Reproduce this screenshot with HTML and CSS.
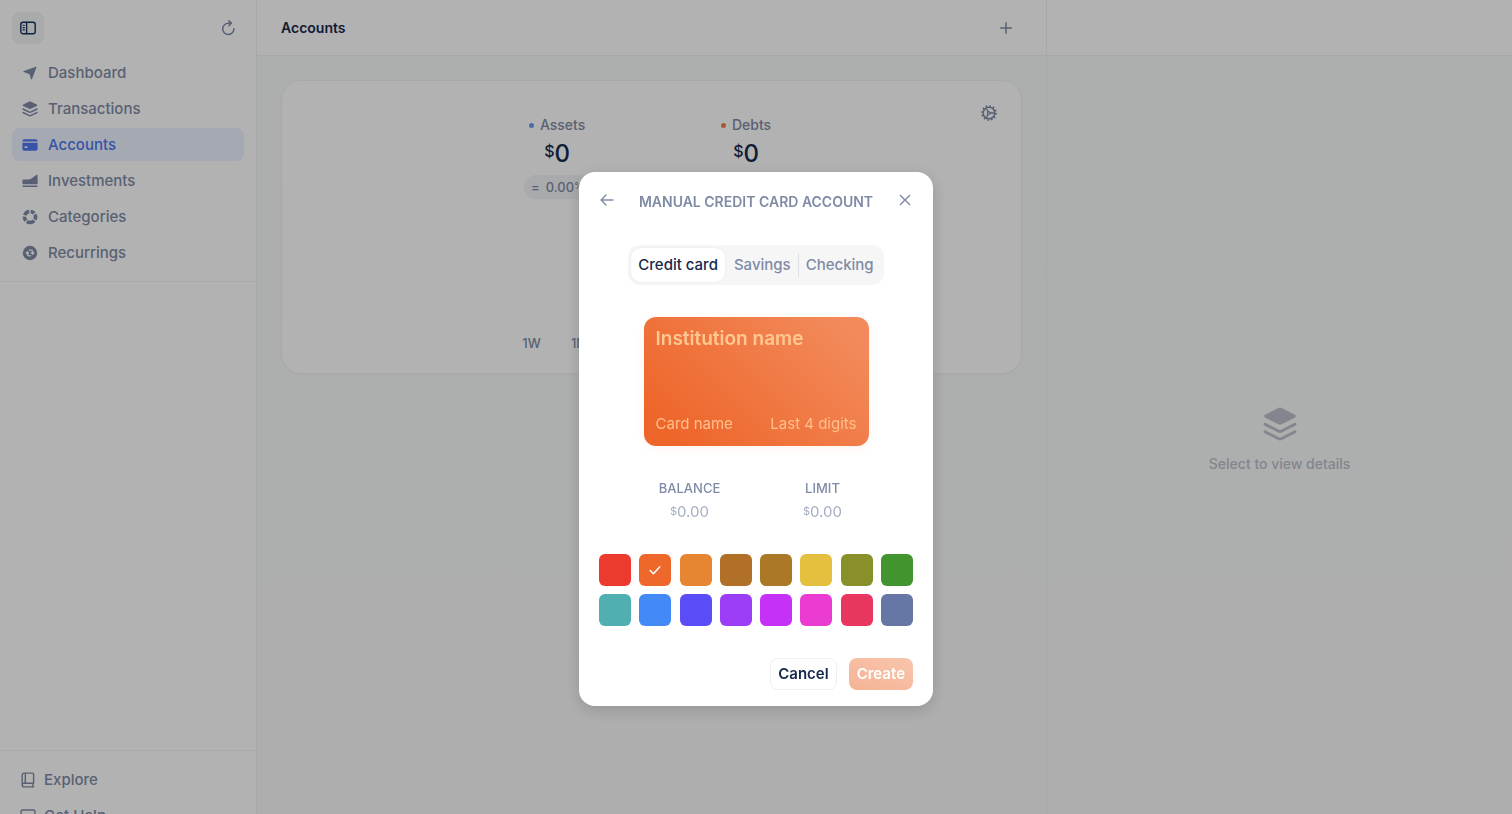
FILE: index.html
```html
<!DOCTYPE html>
<html lang="en">
<head>
<meta charset="utf-8">
<title>Accounts</title>
<link rel="stylesheet" href="styles.css">
</head>
<body>
<div class="app">
  <aside class="sidebar">
    <div class="sidebar-top">
      <button class="icon-button toggle" type="button" aria-label="Toggle sidebar">
        <svg width="16" height="16" viewBox="0 0 16 16" fill="none" stroke="currentColor" stroke-width="1.4" stroke-linecap="round"><rect x=".8" y="2.3" width="14.4" height="11.4" rx="2.2"/><path d="M6.6 2.5v11"/><path d="M3 5.3h1.4M3 7.6h1.4M3 9.9h1.4" stroke-width="1.1"/></svg>
      </button>
      <button class="icon-button" type="button" aria-label="Refresh">
        <svg width="16" height="16" viewBox="0 0 16 16" fill="none" stroke="currentColor" stroke-width="1.5" stroke-linecap="round" stroke-linejoin="round"><path d="M13.900 8.700A5.600 5.600 0 1 1 8.300 3.300h3"/><path d="M8.900.9 11.400 3.300 8.900 5.800"/></svg>
      </button>
    </div>
    <nav class="nav">
      <a class="nav-item" href="#"><svg width="16" height="16" viewBox="0 0 16 16" fill="currentColor"><path d="M13.8 1.8c.4-.1.7.2.6.6L10 14c-.2.6-.9.6-1.1 0L7.5 9.2 1.8 7.1c-.6-.2-.6-1 0-1.2z"/></svg>Dashboard</a>
      <a class="nav-item" href="#"><svg width="16" height="16" viewBox="0 0 16 16" fill="currentColor"><path d="M7.3.6a1.6 1.6 0 0 1 1.4 0l6 2.9c.7.4.7 1 0 1.4l-6 2.9a1.6 1.6 0 0 1-1.4 0l-6-2.9c-.7-.4-.7-1 0-1.4z"/><path d="m1 8 6.4 3.2q.6.3 1.2 0L15 8M1 11.5l6.4 3.2q.6.3 1.2 0l6.4-3.2" fill="none" stroke="currentColor" stroke-width="1.4" stroke-linecap="round"/></svg>Transactions</a>
      <a class="nav-item active" href="#"><svg width="16" height="16" viewBox="0 0 16 16" fill="currentColor"><path d="M2.2 2.2h11.6A1.8 1.8 0 0 1 15.6 4v.4H.4V4a1.8 1.8 0 0 1 1.8-1.8zM.4 5.800h15.200v6a2 2 0 0 1-2 2H2.400a2 2 0 0 1-2-2zM3.200 9.200q-.9 0-.9.900t.9.900h1.600q.9 0 .9-.9t-.9-.9z" fill-rule="evenodd"/></svg>Accounts</a>
      <a class="nav-item" href="#"><svg width="16" height="16" viewBox="0 0 16 16" fill="currentColor"><path d="M.4 7.400q0-.9.900-.9h4.700q1.800 0 3-.8l5.200-3.800q1.400-.9 1.400.5v8.900H.4z"/><rect x=".4" y="12.600" width="15.200" height="1.500" rx=".7"/></svg>Investments</a>
      <a class="nav-item" href="#"><svg width="16" height="16" viewBox="0 0 16 16" fill="none" stroke="currentColor" stroke-width="3.600"><path d="M8.700 2.500a5.500 5.500 0 0 1 3.500 1.900M12.900 5.500a5.500 5.500 0 0 1-.1 5.200M12.100 11.600a5.500 5.500 0 0 1-7.200 1M3.900 11.600a5.500 5.500 0 0 1-1.400-4M2.800 6.300a5.500 5.500 0 0 1 4.400-3.800"/></svg>Categories</a>
      <a class="nav-item" href="#"><svg width="16" height="16" viewBox="0 0 16 16"><circle cx="8" cy="8" r="7.200" fill="currentColor"/><path d="M6.900 5.200h2q1.700 0 1.700 1.700v1.800M9 7.500l1.600 1.500 1.600-1.500M9.100 10.800h-2q-1.700 0-1.700-1.700V7.300M3.800 8.500l1.600-1.500L7 8.500" class="knockout"/></svg>Recurrings</a>
    </nav>
    <div class="sidebar-bottom">
      <a class="nav-item" href="#"><svg width="16" height="16" viewBox="0 0 16 16" fill="none" stroke="currentColor" stroke-width="1.400" stroke-linecap="round" stroke-linejoin="round"><path d="M13.600 14.900H4.200a2 2 0 0 1-2-2V3.100a2 2 0 0 1 2-2h8.400a1 1 0 0 1 1 1v9.100H4.200a1.800 1.800 0 0 0-2 1.800M5.300 1.300v9.700M12.900 11.300v3.500"/></svg>Explore</a>
      <a class="nav-item" href="#"><svg width="16" height="16" viewBox="0 0 16 16" fill="none" stroke="currentColor" stroke-width="1.400" stroke-linejoin="round"><path d="M3 2h10a2 2 0 0 1 2 2v7a2 2 0 0 1-2 2h-3l-2 2-2-2H3a2 2 0 0 1-2-2V4a2 2 0 0 1 2-2z"/></svg>Get Help</a>
    </div>
  </aside>

  <main class="main">
    <header class="bar">
      <h1>Accounts</h1>
      <button class="icon-button" type="button" aria-label="Add account"><svg width="16" height="16" viewBox="0 0 16 16" fill="none" stroke="currentColor" stroke-width="1.500" stroke-linecap="round"><path d="M8 2.700v10.600M2.700 8h10.600"/></svg></button>
    </header>
    <section class="summary">
      <button class="icon-button settings" type="button" aria-label="Settings"><svg width="18" height="18" viewBox="0 0 18 18" fill="none" stroke="currentColor"><circle cx="9" cy="9" r="5.800" stroke-width="1.500"/><circle cx="9" cy="9" r="7.100" stroke-width="1.500" stroke-dasharray="1.800 1.917"/><path d="M6.200 4.200 7.700 7v4l-1.500 2.800M7.700 7 11 9l-3.300 2M11 9h3.500" stroke-width="1.300"/></svg></button>
      <div class="totals">
        <div class="total"><div class="total-label"><i class="dot blue"></i>Assets</div><div class="amount"><sup>$</sup>0</div><div class="pill"><span>=</span><span>0.00<small>%</small></span></div></div>
        <div class="total"><div class="total-label"><i class="dot orange"></i>Debts</div><div class="amount"><sup>$</sup>0</div></div>
      </div>
      <div class="ranges"><button type="button">1W</button><button type="button">1M</button><button type="button">3M</button><button type="button">YTD</button><button type="button">1Y</button><button type="button">ALL</button></div>
    </section>
  </main>

  <section class="details">
    <div class="bar"></div>
    <div class="empty">
      <svg width="36" height="36" viewBox="0 0 36 36" fill="currentColor"><path d="M16.300 2a4 4 0 0 1 3.400 0l13 6.500c1.700.9 1.700 2.300 0 3.200l-13 6.600a4 4 0 0 1-3.400 0l-13-6.600c-1.700-.9-1.700-2.300 0-3.200z"/><path d="m3 18.200 13.400 6.900q1.600.8 3.200 0L33 18.200M3 25.700l13.400 6.900q1.600.8 3.200 0L33 25.700" fill="none" stroke="currentColor" stroke-width="2.800" stroke-linecap="round"/></svg>
      <p>Select to view details</p>
    </div>
  </section>
</div>

<div class="backdrop">
  <form class="modal" role="dialog" aria-labelledby="modal-title">
    <header class="modal-head">
      <button class="icon-button" type="button" aria-label="Back"><svg width="16" height="16" viewBox="0 0 16 16" fill="none" stroke="currentColor" stroke-width="1.400" stroke-linecap="round" stroke-linejoin="round"><path d="M14 8H2.200M7 3.100 2.100 8 7 12.900"/></svg></button>
      <h2 id="modal-title">MANUAL CREDIT CARD ACCOUNT</h2>
      <button class="icon-button" type="button" aria-label="Close"><svg width="16" height="16" viewBox="0 0 16 16" fill="none" stroke="currentColor" stroke-width="1.400" stroke-linecap="round"><path d="m3.400 3.400 9.200 9.200M12.600 3.400l-9.200 9.200"/></svg></button>
    </header>

    <div class="tabs">
      <button class="tab selected" type="button">Credit card</button>
      <button class="tab" type="button">Savings</button>
      <span class="tab-line"></span>
      <button class="tab" type="button">Checking</button>
    </div>

    <div class="card">
      <input class="institution" type="text" placeholder="Institution name" aria-label="Institution name">
      <div class="card-row">
        <input type="text" placeholder="Card name" aria-label="Card name">
        <input class="digits" type="text" placeholder="Last 4 digits" aria-label="Last 4 digits">
      </div>
    </div>

    <div class="money">
      <div class="field"><label for="balance">BALANCE</label><div class="money-value"><span>$</span><input id="balance" type="text" placeholder="0.00"></div></div>
      <div class="field"><label for="limit">LIMIT</label><div class="money-value"><span>$</span><input id="limit" type="text" placeholder="0.00"></div></div>
    </div>

    <div class="swatches" role="radiogroup" aria-label="Card color">
      <input type="radio" name="color" aria-label="Red" class="c-red">
      <label class="swatch-checked"><input type="radio" name="color" aria-label="Orange" class="c-orange" checked><svg width="12" height="12" viewBox="0 0 12 12" fill="none" stroke="currentColor" stroke-width="1.500" stroke-linecap="round" stroke-linejoin="round"><path d="m1.200 6.500 3.200 3.200 6.400-7"/></svg></label>
      <input type="radio" name="color" aria-label="Amber" class="c-amber">
      <input type="radio" name="color" aria-label="Brown" class="c-brown">
      <input type="radio" name="color" aria-label="Bronze" class="c-bronze">
      <input type="radio" name="color" aria-label="Yellow" class="c-yellow">
      <input type="radio" name="color" aria-label="Olive" class="c-olive">
      <input type="radio" name="color" aria-label="Green" class="c-green">
      <input type="radio" name="color" aria-label="Teal" class="c-teal">
      <input type="radio" name="color" aria-label="Blue" class="c-blue">
      <input type="radio" name="color" aria-label="Indigo" class="c-indigo">
      <input type="radio" name="color" aria-label="Purple" class="c-purple">
      <input type="radio" name="color" aria-label="Violet" class="c-violet">
      <input type="radio" name="color" aria-label="Pink" class="c-pink">
      <input type="radio" name="color" aria-label="Rose" class="c-rose">
      <input type="radio" name="color" aria-label="Slate" class="c-slate">
    </div>

    <footer class="actions">
      <button class="cancel" type="button">Cancel</button>
      <button class="create" type="submit" disabled>Create</button>
    </footer>
  </form>
</div>
</body>
</html>
```
FILE: styles.css
```css
* { box-sizing: border-box; }
body {
  margin: 0;
  font: 500 15px/20px Inter, "Liberation Sans", sans-serif;
  color: #7f8ba5;
  overflow: hidden;
}
button, input { font: inherit; color: inherit; border: 0; padding: 0; background: none; }
h1, h2, p { margin: 0; }
svg { display: block; flex: none; }
a { color: inherit; text-decoration: none; }

.app {
  display: grid;
  grid-template-columns: 257px 1.694fr 1fr;
  height: 100vh;
  background: linear-gradient(#f7fbf9, #f9faf9);
}
.sidebar {
  display: flex;
  flex-direction: column;
  min-height: 0;
  background: #fff;
  border-right: 1px solid #f0f1f3;
}
.sidebar-top { display: flex; justify-content: space-between; padding: 12px; }
.icon-button {
  display: grid;
  place-items: center;
  width: 32px;
  height: 32px;
  border-radius: 8px;
}
.toggle { background: #f2f5f4; color: #16305c; }
.nav {
  display: flex;
  flex-direction: column;
  gap: 3px;
  padding: 0 12px 12px;
  border-bottom: 1px solid #f0f1f3;
}
.nav-item {
  display: flex;
  align-items: center;
  gap: 10px;
  height: 33px;
  padding: 0 10px;
  border-radius: 8px;
}
.nav-item.active { background: #edf2ff; color: #4c78f0; }
.knockout { fill: none; stroke: #fff; stroke-width: 1.3; }
.sidebar-bottom {
  display: flex;
  flex-direction: column;
  gap: 3px;
  height: 64px;
  margin-top: auto;
  padding: 12px 10px 0;
  overflow: hidden;
  border-top: 1px solid #f0f1f3;
}
.sidebar-bottom .nav-item { gap: 8px; flex: none; }

.bar {
  display: flex;
  align-items: center;
  justify-content: space-between;
  height: 56px;
  padding: 0 24px;
  background: #fff;
  border-bottom: 1px solid #f0f1f3;
}
h1 { font-size: 14px; font-weight: 600; color: #16294d; }
.summary {
  position: relative;
  display: flex;
  flex-direction: column;
  justify-content: space-between;
  height: 294px;
  margin: 24px;
  padding: 34px 16px 20px;
  background: #fff;
  border: 1px solid #f0f2f3;
  border-radius: 20px;
  box-shadow: 0 1px 2px rgba(0, 0, 0, .03);
}
.settings { position: absolute; top: 16px; right: 16px; }
.totals { display: flex; justify-content: center; }
.total { display: flex; flex-direction: column; align-items: center; width: 189px; }
.total-label { display: flex; align-items: center; gap: 6px; font-size: 14px; }
.dot { width: 5px; height: 5px; border-radius: 50%; }
.blue { background: #6c98f3; }
.orange { background: #f08246; }
.amount { display: flex; font-size: 24px; line-height: 37px; color: #16294d; }
.amount sup { font-size: 16px; line-height: 33px; vertical-align: baseline; }
.pill {
  display: flex;
  gap: 6px;
  height: 24px;
  margin-top: 3px;
  padding: 0 7px;
  border-radius: 12px;
  background: #f2f4f7;
  font-size: 13px;
  line-height: 24px;
}
.pill small { font-size: 9px; vertical-align: 3px; line-height: 1; }
.ranges { display: flex; justify-content: center; font-size: 13px; }
.ranges button { width: 48px; }

.main, .details { display: flex; flex-direction: column; min-width: 0; }
.details { border-left: 1px solid #f0f1f3; }
.empty {
  flex: 1;
  display: flex;
  flex-direction: column;
  align-items: center;
  justify-content: center;
  gap: 12px;
  padding-top: 10px;
  font-size: 14px;
  color: #bcbfcd;
}

.backdrop {
  position: fixed;
  inset: 0;
  display: flex;
  align-items: center;
  justify-content: center;
  padding-top: 64px;
  background: rgba(0, 0, 0, .3);
}
.modal {
  display: flex;
  flex-direction: column;
  align-items: center;
  width: 354px;
  padding: 12px 12px 16px;
  background: #fff;
  border-radius: 16px;
  box-shadow: 0 4px 16px rgba(0, 0, 0, .16);
}
.modal-head {
  display: flex;
  justify-content: space-between;
  align-items: flex-start;
  align-self: stretch;
}
h2 { font-size: 14px; font-weight: 600; line-height: 36px; white-space: nowrap; }
.tabs {
  display: flex;
  align-items: center;
  height: 40px;
  margin-top: 25px;
  padding: 3px;
  border-radius: 12px;
  background: #f6f6f6;
}
.tab { height: 34px; padding: 0 7px; border-radius: 10px; }
.tab:nth-child(2) { margin-left: 2px; }
.tab-line { width: 1px; height: 24px; background: #dfe1e8; }
.selected { background: #fff; color: #16294d; box-shadow: 0 0 2px rgba(0, 0, 0, .08); }
.card {
  display: flex;
  flex-direction: column;
  justify-content: space-between;
  width: 225px;
  height: 129px;
  margin-top: 32px;
  padding: 9px 12px 12px;
  border-radius: 12px;
  background: linear-gradient(45deg, #ee6529 10%, #f28a5b 90%);
  box-shadow: 0 2px 8px rgba(238, 101, 41, .08);
}
input::placeholder { color: inherit; opacity: 1; }
.card input { min-width: 0; width: 100%; color: #ffc08c; font-weight: 400; }
.card .institution { font-size: 19px; line-height: 26px; font-weight: 600; color: #ffc890; }
.card-row { display: flex; justify-content: space-between; }
.card-row .digits { text-align: right; }
.money { display: flex; justify-content: center; margin-top: 32px; }
.field { display: flex; flex-direction: column; align-items: center; gap: 4px; width: 133px; }
.field label { font-size: 13px; }
.money-value { display: flex; color: #a5aec0; font-weight: 400; }
.money-value span { font-size: 11px; line-height: 18px; }
.money-value input { width: 32px; height: 20px; }
.swatches {
  display: grid;
  grid-template-columns: repeat(8, 32px);
  justify-content: space-between;
  align-self: stretch;
  row-gap: 8px;
  margin-top: 32px;
  padding: 0 8px;
}
.swatches input {
  appearance: none;
  display: block;
  width: 32px;
  height: 32px;
  margin: 0;
  border-radius: 6px;
}
.swatch-checked { display: grid; place-items: center; color: #fff; }
.swatch-checked > * { grid-area: 1 / 1; }
.swatch-checked svg { z-index: 1; }
.swatches .c-red { background: #ec3b2e; }
.swatches .c-orange { background: #ee682b; }
.swatches .c-amber { background: #e68632; }
.swatches .c-brown { background: #b17028; }
.swatches .c-bronze { background: #aa7827; }
.swatches .c-yellow { background: #e5c03f; }
.swatches .c-olive { background: #89902a; }
.swatches .c-green { background: #41942e; }
.swatches .c-teal { background: #50afb0; }
.swatches .c-blue { background: #4389f7; }
.swatches .c-indigo { background: #5a4df6; }
.swatches .c-purple { background: #9b3df7; }
.swatches .c-violet { background: #c631f7; }
.swatches .c-pink { background: #ea3bd3; }
.swatches .c-rose { background: #e93661; }
.swatches .c-slate { background: #6677a5; }
.actions {
  display: flex;
  align-self: stretch;
  justify-content: flex-end;
  gap: 12px;
  margin-top: 32px;
  padding: 0 8px;
  font-weight: 600;
}
.actions button { height: 32px; border-radius: 8px; padding: 0 8px; }
.cancel { color: #16294d; }
.actions .cancel { border: 1px solid #f0f0f2; padding: 0 7px; }
.create { color: #fff; background: linear-gradient(20deg, #f6b394, #f8c5ae); }
```
